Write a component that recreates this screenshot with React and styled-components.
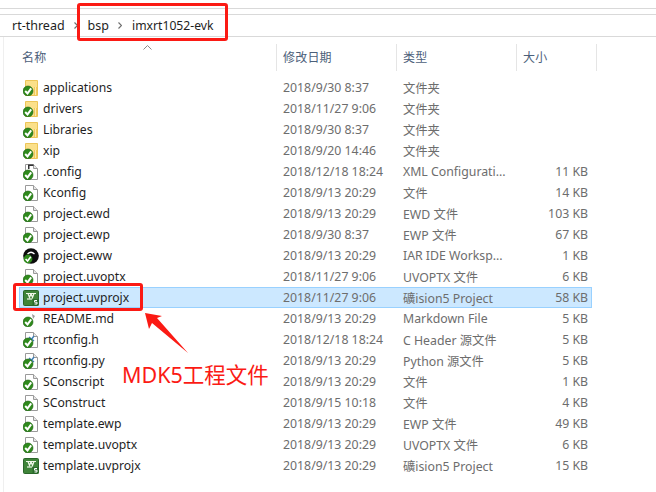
import React from 'react';
import styled, { createGlobalStyle } from 'styled-components';

const GlobalStyle = createGlobalStyle`
  html, body {
    margin: 0;
    background: #fff;
  }
`;

const UI_FONT = `"Noto Sans", "Noto Sans CJK SC", sans-serif`;

const Window = styled.div`
  position: relative;
  width: 656px;
  height: 492px;
  overflow: hidden;
  background: #fff;
  font-family: ${UI_FONT};
  font-size: 12px;
`;

const TopStrip = styled.div`
  height: 5px;
  margin-top: 8px;
  border-top: 1px solid #d9d9d9;
  border-bottom: 1px solid #d9d9d9;
`;

const AddressBar = styled.div`
  display: flex;
  align-items: center;
  height: 21px;
  border-bottom: 1px solid #d9d9d9;
  padding-left: 12px;
  color: #1e1e1e;
`;

const Crumb = styled.span`
  line-height: 21px;
  font-size: ${({ $size }) => $size || 12.5}px;
`;

const CrumbArrow = styled.svg`
  width: 4px;
  height: 7px;
  margin: 0 9.5px;
  flex: none;
`;

const Pane = styled.div`
  position: relative;
  margin-left: 3px;
  height: 455px;
  border-left: 1px solid #efefef;
`;

const HeaderRow = styled.div`
  display: grid;
  grid-template-columns: 255px 120px 120px 80px;
  margin-left: 18px;
  padding-top: 7px;
  margin-bottom: 6px;
`;

const HeaderCell = styled.div`
  height: 27px;
  line-height: 27px;
  padding-left: ${({ $first }) => ($first ? 0 : 6)}px;
  box-sizing: border-box;
  border-right: 1px solid #e5e5e5;
  color: #4c607a;
  font-size: 12px;
  letter-spacing: 0.2px;
`;

const SortCaret = styled.svg`
  position: absolute;
  left: 139px;
  top: 8px;
  width: 9px;
  height: 5px;
`;

const FileList = styled.div`
  display: flex;
  flex-direction: column;
  width: 573px;
  margin-left: 15px;
`;

const Row = styled.div`
  display: grid;
  grid-template-columns: 21px 240px 120px 120px 65px;
  align-items: center;
  height: 21px;
  box-sizing: border-box;
  padding-left: 3px;
  background: ${({ $selected }) => ($selected ? '#cce8ff' : 'transparent')};
  outline: ${({ $selected }) => ($selected ? '1px solid #99d1ff' : 'none')};
  outline-offset: -1px;
`;

const IconSlot = styled.div`
  width: 16px;
  height: 16px;
  margin-left: 1px;
`;

const NameCell = styled.div`
  color: #1f1f1f;
  font-size: 12.2px;
  white-space: nowrap;
`;

const MetaCell = styled.div`
  color: #6d6d6d;
  font-size: 12.3px;
  white-space: nowrap;
  text-align: ${({ $right }) => ($right ? 'right' : 'left')};
`;

const Frame = styled.div`
  position: absolute;
  left: ${({ $x }) => $x}px;
  top: ${({ $y }) => $y}px;
  width: ${({ $w }) => $w}px;
  height: ${({ $h }) => $h}px;
  box-sizing: border-box;
  border: 3px solid #fb1a14;
  border-radius: 3px;
`;

const CalloutArrow = styled.svg`
  position: absolute;
  left: 140px;
  top: 308px;
  width: 56px;
  height: 52px;
`;

const CalloutText = styled.div`
  position: absolute;
  left: 122px;
  top: 361px;
  font-size: 21.5px;
  line-height: 28px;
  color: #fb1a14;
  white-space: nowrap;
`;

const CheckBadge = () => (
  <g>
    <circle cx="5" cy="11" r="5" fill="#2f8a1c" stroke="#1d5f10" strokeWidth="0.6" />
    <path d="M2.2 11 L4.5 13.4 L8.2 8.4" fill="none" stroke="#fff" strokeWidth="2" />
  </g>
);

const FolderIcon = () => (
  <svg width="16" height="16" viewBox="0 0 16 16">
    <path d="M2.5 0.5 H14.5 V15.5 H2.5 Z" fill="#fbe08a" stroke="#ecc558" />
    <path d="M11 7 H14 V15 H11 Z" fill="#f4ca5c" />
    <path d="M12.5 7 V15" stroke="#fbe9ad" />
    <CheckBadge />
  </svg>
);

const PageIcon = ({ mark }) => (
  <svg width="16" height="16" viewBox="0 0 16 16">
    <path d="M2.5 0.5 H10.5 L14.5 4.5 V15.5 H2.5 Z" fill="#fff" stroke="#9a9a9a" />
    <path d="M10.5 0.5 V4.5 H14.5" fill="#e6e6e6" stroke="#9a9a9a" />
    {mark === 'xml' && <path d="M5 0.5 H10.5 V2 H6.5 V5 H5 Z" fill="#333" />}
    {mark === 'code' && <path d="M6 5 L11 9 M11 4 L8 8" stroke="#3f7fb5" strokeWidth="1.4" />}
    <CheckBadge />
  </svg>
);

const MarkdownIcon = () => (
  <svg width="16" height="16" viewBox="0 0 16 16">
    <path d="M9 3 L12 5 L10 8 Z" fill="#9a9a9a" />
    <CheckBadge />
  </svg>
);

const WorkspaceIcon = () => (
  <svg width="16" height="16" viewBox="0 0 16 16">
    <circle cx="8" cy="8" r="7.8" fill="#0c0c0c" />
    <path d="M4.5 6 Q8 2.5 11.5 6" fill="none" stroke="#fff" strokeWidth="1.2" />
    <circle cx="5" cy="11" r="4.4" fill="#2f8a1c" />
    <path d="M2.6 11 L4.6 13 L7.8 8.8" fill="none" stroke="#fff" strokeWidth="1.6" />
  </svg>
);

const KeilIcon = () => (
  <svg width="16" height="16" viewBox="0 0 16 16">
    <rect x="0.5" y="0.5" width="15" height="15" rx="1" fill="#3f8439" stroke="#2a662a" />
    <path d="M3 3.5 H13 M5 3.5 L6.5 7.5 L8 3.5 M8 3.5 L9.5 7.5 L11 3.5" stroke="#eef6e8" strokeWidth="1.2" fill="none" />
    <path d="M4 9 H9" stroke="#eef6e8" strokeWidth="1.2" />
    <rect x="9.5" y="9" width="6" height="6.5" fill="#2a6a2b" />
    <path d="M14 10.5 H11.5 V12.2 H14 V14 H11.5" stroke="#fff" strokeWidth="1" fill="none" />
  </svg>
);

const icons = {
  folder: <FolderIcon />,
  page: <PageIcon />,
  xml: <PageIcon mark="xml" />,
  code: <PageIcon mark="code" />,
  md: <MarkdownIcon />,
  eww: <WorkspaceIcon />,
  keil: <KeilIcon />,
};

const FILES = [
  ['folder', 'applications', '2018/9/30 8:37', '文件夹', ''],
  ['folder', 'drivers', '2018/11/27 9:06', '文件夹', ''],
  ['folder', 'Libraries', '2018/9/30 8:37', '文件夹', ''],
  ['folder', 'xip', '2018/9/20 14:46', '文件夹', ''],
  ['xml', '.config', '2018/12/18 18:24', 'XML Configurati...', '11 KB'],
  ['page', 'Kconfig', '2018/9/13 20:29', '文件', '14 KB'],
  ['page', 'project.ewd', '2018/9/13 20:29', 'EWD 文件', '103 KB'],
  ['page', 'project.ewp', '2018/9/30 8:37', 'EWP 文件', '67 KB'],
  ['eww', 'project.eww', '2018/9/13 20:29', 'IAR IDE Worksp...', '1 KB'],
  ['page', 'project.uvoptx', '2018/11/27 9:06', 'UVOPTX 文件', '6 KB'],
  ['keil', 'project.uvprojx', '2018/11/27 9:06', '礦ision5 Project', '58 KB', true],
  ['md', 'README.md', '2018/9/13 20:29', 'Markdown File', '5 KB'],
  ['code', 'rtconfig.h', '2018/12/18 18:24', 'C Header 源文件', '5 KB'],
  ['code', 'rtconfig.py', '2018/9/13 20:29', 'Python 源文件', '5 KB'],
  ['page', 'SConscript', '2018/9/13 20:29', '文件', '1 KB'],
  ['page', 'SConstruct', '2018/9/15 10:18', '文件', '4 KB'],
  ['page', 'template.ewp', '2018/9/13 20:29', 'EWP 文件', '49 KB'],
  ['page', 'template.uvoptx', '2018/9/13 20:29', 'UVOPTX 文件', '6 KB'],
  ['keil', 'template.uvprojx', '2018/9/13 20:29', '礦ision5 Project', '15 KB'],
];

const Chevron = () => (
  <CrumbArrow viewBox="0 0 4 7">
    <path d="M0.5 0.5 L3.5 3.5 L0.5 6.5" fill="none" stroke="#6f6f6f" strokeWidth="1.2" />
  </CrumbArrow>
);

const App = () => (
  <Window>
    <GlobalStyle />
    <TopStrip />
    <AddressBar>
      <Crumb>rt-thread</Crumb>
      <Chevron />
      <Crumb>bsp</Crumb>
      <Chevron />
      <Crumb $size={12.2}>imxrt1052-evk</Crumb>
    </AddressBar>
    <Pane>
      <SortCaret viewBox="0 0 9 5">
        <path d="M0.5 4.5 L4.5 0.5 L8.5 4.5" fill="none" stroke="#8a8a8a" />
      </SortCaret>
      <HeaderRow>
        <HeaderCell $first>名称</HeaderCell>
        <HeaderCell>修改日期</HeaderCell>
        <HeaderCell>类型</HeaderCell>
        <HeaderCell>大小</HeaderCell>
      </HeaderRow>
      <FileList>
        {FILES.map(([icon, name, date, type, size, selected]) => (
          <Row key={name} $selected={selected}>
            <IconSlot>{icons[icon]}</IconSlot>
            <NameCell>{name}</NameCell>
            <MetaCell>{date}</MetaCell>
            <MetaCell>{type}</MetaCell>
            <MetaCell $right>{size}</MetaCell>
          </Row>
        ))}
      </FileList>
    </Pane>
    <Frame $x={77} $y={3} $w={151} $h={38} />
    <Frame $x={13} $y={283} $w={130} $h={28} />
    <CalloutArrow viewBox="0 0 56 52">
      <path d="M5 5 L22 8 L17 10 L48 45 L12 15 L9 21 Z" fill="#fb1a14" />
    </CalloutArrow>
    <CalloutText>MDK5工程文件</CalloutText>
  </Window>
);

export default App;
